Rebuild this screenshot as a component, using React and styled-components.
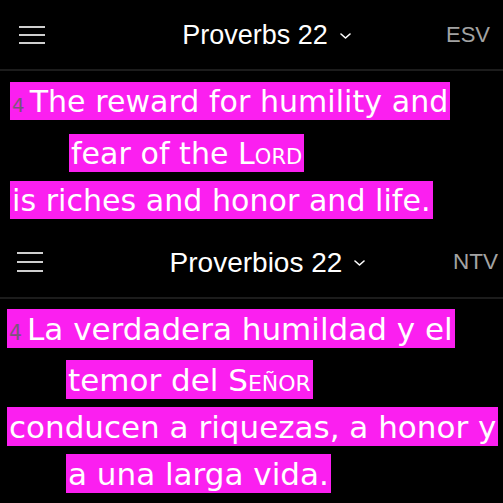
import styled, { createGlobalStyle } from 'styled-components';

const GlobalStyle = createGlobalStyle`
  html, body {
    margin: 0;
    padding: 0;
    background: #000;
  }
  body {
    overflow: hidden;
  }
`

const Page = styled.div`
  width: 503px;
  height: 503px;
  overflow: hidden;
  background: #000;
  display: flex;
  flex-direction: column;
`

const Panel = styled.section`
  flex: ${p => (p.$height ? `0 0 ${p.$height}px` : '1 1 auto')};
  overflow: hidden;
`

const Header = styled.header`
  box-sizing: border-box;
  height: ${p => p.$h + 2}px;
  display: grid;
  grid-template-columns: 1fr auto 1fr;
  align-items: center;
  padding: 0 ${p => p.$right}px 0 ${p => p.$left}px;
  border-bottom: 2px solid #1c1c1c;
  font-family: "Liberation Sans", Arial, sans-serif;
`

const Menu = styled.div`
  display: flex;
  flex-direction: column;
  gap: ${p => p.$gap}px;
  width: 26px;
  margin-top: 1px;
`

const Bar = styled.span`
  display: block;
  height: 2px;
  background: #cfcfcf;
`

const TitleGroup = styled.div`
  display: flex;
  align-items: center;
  gap: 12px;
  padding-left: ${p => p.$shift}px;
  margin-top: 2px;
`

const Title = styled.span`
  color: #fff;
  font-size: ${p => p.$size}px;
  white-space: nowrap;
`

const Version = styled.span`
  justify-self: end;
  color: #a3a3a3;
  font-size: ${p => p.$size}px;
  margin-top: 1px;
`

const Verses = styled.div`
  padding: 7px 0 0 ${p => p.$inset}px;
  font-family: "DejaVu Sans", Verdana, sans-serif;
  font-size: ${p => p.$size}px;
  line-height: ${p => p.$leading}px;
  letter-spacing: ${p => p.$track}px;
  color: #fff;
`

const PoemLine = styled.div`
  padding-left: 59px;
  text-indent: -59px;
  white-space: nowrap;
`

const Mark = styled.span`
  background: #fb1ff0;
  padding: 2px 2px 1px;
`

const VerseNum = styled.span`
  font-size: 0.66em;
  color: #7a577a;
  margin-right: 5px;
`

const SmallCaps = styled.span`
  font-variant: small-caps;
`

function Chevron() {
  return (
    <svg width="11" height="6" viewBox="0 0 11 6">
      <polyline points="1,1 5.5,5 10,1" fill="none" stroke="#fff" strokeWidth="1.6" strokeLinecap="round" strokeLinejoin="round" />
    </svg>
  )
}

function Reader({ panel }) {
  return (
    <Panel $height={panel.height}>
      <Header $h={panel.headerH} $left={panel.left} $right={panel.right}>
        <Menu $gap={panel.barGap}>
          <Bar />
          <Bar />
          <Bar />
        </Menu>
        <TitleGroup $shift={panel.shift}>
          <Title $size={panel.titleSize}>{panel.book}</Title>
          <Chevron />
        </TitleGroup>
        <Version $size={panel.versionSize}>{panel.version}</Version>
      </Header>
      <Verses $inset={panel.inset} $size={panel.verseSize} $leading={panel.leading} $track={panel.track}>
        {panel.lines.map((line, i) => (
          <PoemLine key={i}>
            {line.map((part, j) => (
              <span key={j}>
                {j > 0 && <br />}
                <Mark>{part}</Mark>
              </span>
            ))}
          </PoemLine>
        ))}
      </Verses>
    </Panel>
  )
}

const panels = [
  {
    height: 226,
    headerH: 69,
    left: 19,
    right: 13,
    shift: 24,
    barGap: 6.4,
    book: 'Proverbs 22',
    version: 'ESV',
    titleSize: 27,
    versionSize: 22,
    inset: 10,
    verseSize: 30,
    leading: 47.5,
    track: 0.05,
    lines: [
      [
        <><VerseNum>4</VerseNum>The reward for humility and</>,
        <>fear of the <SmallCaps>Lord</SmallCaps></>
      ],
      ['is riches and honor and life.']
    ]
  },
  {
    headerH: 71,
    left: 17,
    right: 5,
    shift: 20,
    barGap: 6.6,
    book: 'Proverbios 22',
    version: 'NTV',
    titleSize: 28,
    versionSize: 22.5,
    inset: 7,
    verseSize: 31,
    leading: 47,
    track: 0,
    lines: [
      [
        <><VerseNum>4</VerseNum>La verdadera humildad y el</>,
        <>temor del <SmallCaps>Señor</SmallCaps></>
      ],
      ['conducen a riquezas, a honor y', 'a una larga vida.']
    ]
  }
]

export default function App() {
  return (
    <Page>
      <GlobalStyle />
      {panels.map((panel, i) => (
        <Reader key={i} panel={panel} />
      ))}
    </Page>
  )
}
